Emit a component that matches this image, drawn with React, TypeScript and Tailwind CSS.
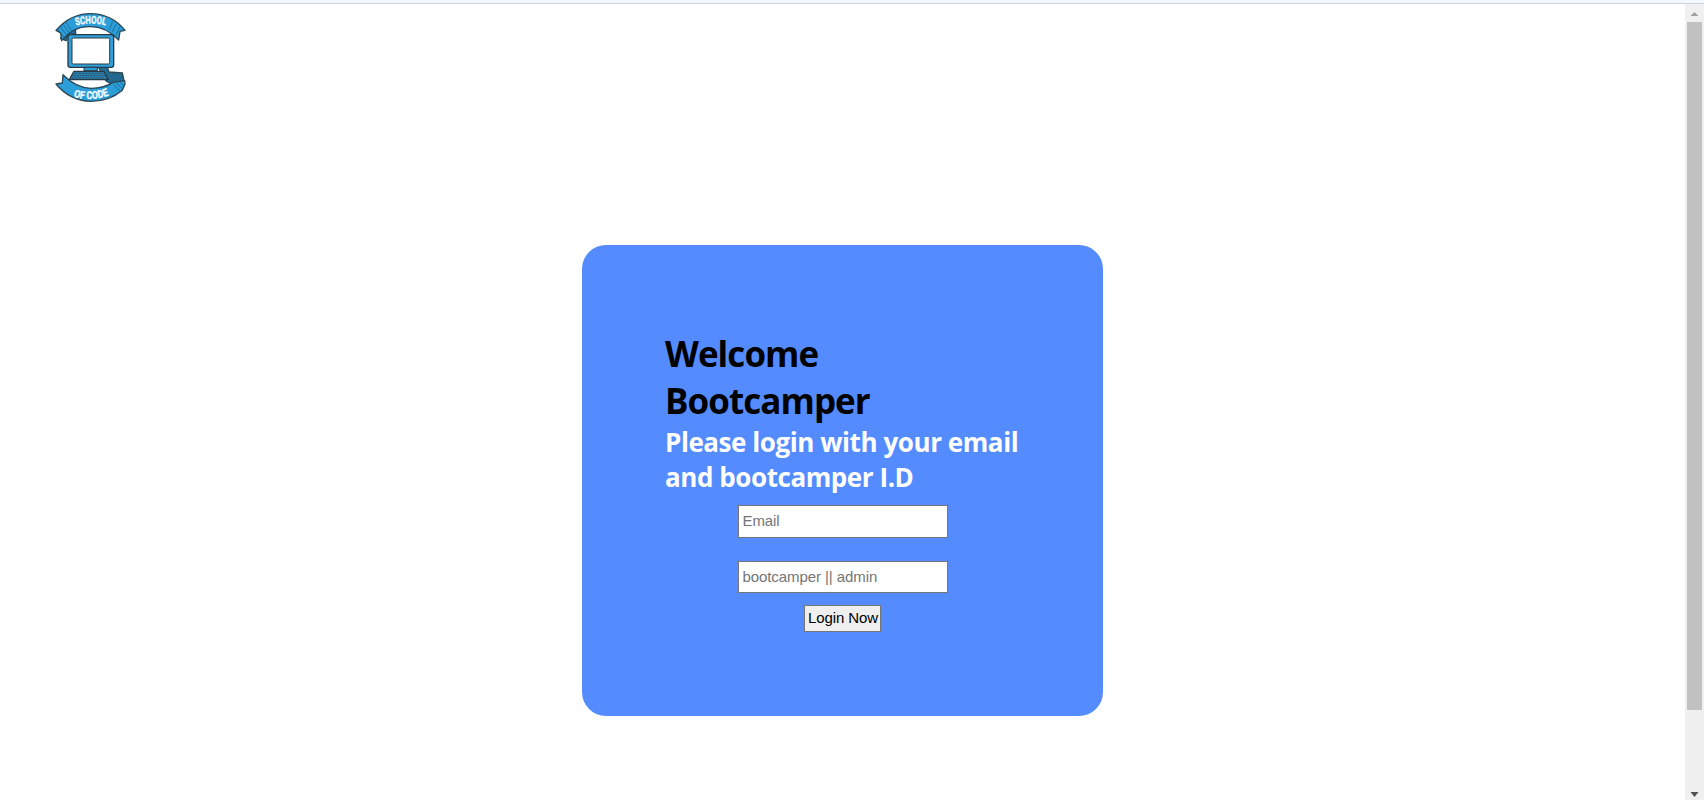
function Logo() {
  return (
    <svg viewBox="42 30 219 282" className="block h-[94px] w-[73px]" role="img" aria-label="School of Code">
      <defs>
        <path id="top-arc" d="M86 84 Q152 58 222 84" />
        <path id="bottom-arc" d="M84 286 Q155 312 226 278" />
      </defs>
      <g stroke="#2c4755" strokeWidth="4" strokeLinejoin="round">
        <path d="M72 89 L106 80 L107 101 L84 106 L79 122 L62 116Z" fill="#1d6f9c" />
        <path d="M48 91 Q92 41 151 41 Q214 41 255 91 L240 94 L236 120 Q196 79 150 80 Q101 78 65 122 L62 99Z" fill="#2b9ed9" />
        <path d="M176 203 L202 201 L207 216 L247 219 L252 242 L218 254 L198 243Z" fill="#236e96" />
        <path d="M69 224 Q107 263 153 265 Q194 264 219 247 L254 242 L255 252 L247 271 Q209 304 153 304 Q89 302 48 252 L67 249Z" fill="#2b9ed9" />
      </g>
      <g stroke="#1d5878" strokeWidth="2" fill="none">
        <path d="M53 87 L72 112 M61 80 L79 104 M69 73 L87 97 M78 66 L94 92 M218 64 L208 89 M229 72 L217 96 M240 80 L227 107" />
        <path d="M195 226 L223 250 M202 220 L234 246 M213 219 L245 243 M225 219 L251 238 M220 254 L242 275 M229 249 L249 268 M239 247 L253 260" />
      </g>
      <rect x="84" y="104" width="137" height="98" rx="7" fill="#329fd8" stroke="#263b47" strokeWidth="4" />
      <rect x="96" y="114" width="113" height="78" rx="4" fill="#fff" stroke="#263b47" strokeWidth="3" />
      <path d="M132 202 H172 V212 H132Z" fill="#2b9ed9" stroke="#263b47" strokeWidth="3" />
      <path d="M102 214 H192 L205 239 H88Z" fill="#2b83b2" stroke="#263b47" strokeWidth="4" strokeLinejoin="round" />
      <path d="M105 220 H190 M100 227 H195 M96 234 H199" stroke="#244b61" strokeWidth="3" strokeDasharray="7 3" />
      <g fill="#f3fbff" stroke="#f3fbff" strokeWidth="1" fontFamily="Roboto, 'Liberation Sans', sans-serif" fontWeight="700" fontSize="32">
        <text><textPath href="#top-arc" startOffset="23" textLength="90" lengthAdjust="spacingAndGlyphs">SCHOOL</textPath></text>
        <text><textPath href="#bottom-arc" startOffset="17" textLength="108" lengthAdjust="spacingAndGlyphs">OF CODE</textPath></text>
      </g>
    </svg>
  );
}

function Scrollbar() {
  return (
    <div className="flex w-[19px] shrink-0 flex-col items-center justify-between bg-[#f0f0f0]">
      <div className="flex flex-col items-center">
        <svg viewBox="0 0 19 18" className="block h-[18px] w-[19px]"><path d="M5.5 12 L9.5 8 L13.5 12Z" fill="#a0a0a0" /></svg>
        <div className="h-[688px] w-[15px] bg-[#c1c1c1]" />
      </div>
      <svg viewBox="0 0 19 18" className="block h-[18px] w-[19px]"><path d="M5.5 10 H13.5 L9.5 15Z" fill="#505050" /></svg>
    </div>
  );
}

const inputClass =
  "block w-[210px] border border-[#767676] bg-white pb-0.5 pl-1 text-[15px] leading-[18px] tracking-[-0.08px] text-black outline-none placeholder:text-[#757575]";

export default function App() {
  return (
    <div className="flex h-[800px] w-full flex-col overflow-hidden bg-white font-['Liberation_Sans',sans-serif]">
      <div className="h-1 shrink-0 border-b border-[#ccd0e4] bg-[#f4f7fd]" />
      <div className="flex min-h-0 flex-1">
        <main className="flex flex-1 flex-col">
          <header className="h-[241px] shrink-0 pt-1.5 pl-[54px]">
            <Logo />
          </header>
          <form className="ml-[582px] flex h-[471px] w-[521px] flex-col items-center rounded-[24px] bg-[#548cff] pt-[85px]" onSubmit={(e) => e.preventDefault()}>
            <div className="w-[355px] font-['Open_Sans','Noto_Sans',sans-serif] font-bold whitespace-nowrap">
              <h1 className="text-[35px] leading-[47px] tracking-[-0.95px] text-black">Welcome<br />Bootcamper</h1>
              <h2 className="mt-px text-[26px] leading-[35px] tracking-[-0.43px] text-white">Please login with your email<br />and bootcamper I.D</h2>
            </div>
            <input type="email" placeholder="Email" aria-label="Email" className={`${inputClass} mt-[10px] h-[33px]`} />
            <input type="text" placeholder="bootcamper || admin" aria-label="Bootcamper ID" className={`${inputClass} mt-[23px] h-[32px]`} />
            <button type="submit" className="mt-3 h-[27px] w-[77px] border border-[#767676] bg-[#efefef] pb-0.5 pl-px text-[15px] leading-[18px] tracking-[-0.1px] whitespace-nowrap text-black">Login Now</button>
          </form>
        </main>
        <Scrollbar />
      </div>
    </div>
  );
}
